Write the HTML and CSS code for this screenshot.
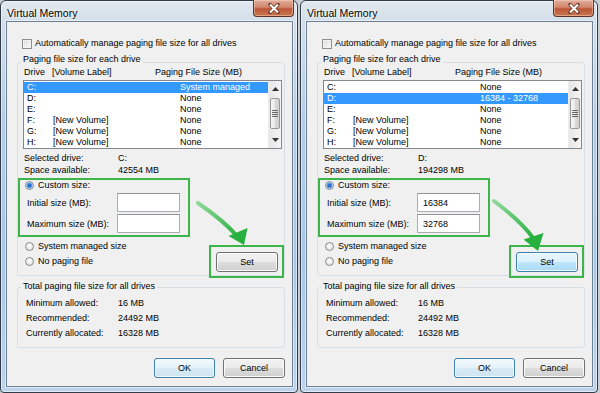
FILE: index.html
```html
<!DOCTYPE html>
<html lang="en">
<head>
  <meta charset="UTF-8">
  <title>Virtual Memory</title>
  <link rel="stylesheet" href="styles.css">
</head>
<body>
  <div class="desktop">

    <!-- left dialog: C: selected, empty custom size -->
    <div class="window">
      <div class="titlebar">
        <span class="title">Virtual Memory</span>
        <span class="close">
          <svg width="14" height="11" viewBox="0 0 14 11"><path d="M3 1.5 L11 9.5 M11 1.5 L3 9.5" stroke="#6b3322" stroke-width="3.4" stroke-linecap="round"/><path d="M3 1.5 L11 9.5 M11 1.5 L3 9.5" stroke="#fff" stroke-width="2"/></svg>
        </span>
      </div>
      <div class="client">
        <div class="auto-row"><span class="checkbox"></span>Automatically manage paging file size for all drives</div>

        <div class="group drives">
          <div class="group-title">Paging file size for each drive</div>
          <div class="list-head"><span class="hd-drive">Drive</span><span class="hd-label">[Volume Label]</span><span>Paging File Size (MB)</span></div>
          <div class="listbox">
            <ul class="rows">
              <li class="row selected"><span class="c-drive">C:</span><span class="c-label"></span><span>System managed</span></li>
              <li class="row"><span class="c-drive">D:</span><span class="c-label"></span><span>None</span></li>
              <li class="row"><span class="c-drive">E:</span><span class="c-label"></span><span>None</span></li>
              <li class="row"><span class="c-drive">F:</span><span class="c-label">[New Volume]</span><span>None</span></li>
              <li class="row"><span class="c-drive">G:</span><span class="c-label">[New Volume]</span><span>None</span></li>
              <li class="row"><span class="c-drive">H:</span><span class="c-label">[New Volume]</span><span>None</span></li>
            </ul>
            <div class="scrollbar">
              <span class="sb-btn"><svg width="7" height="4" viewBox="0 0 7 4"><path d="M0 4 L3.5 0 L7 4 Z" fill="#333"/></svg></span>
              <span class="sb-thumb"><svg width="6" height="7" viewBox="0 0 6 7"><path d="M0 .5 H6 M0 2.5 H6 M0 4.5 H6 M0 6.5 H6" stroke="#666" stroke-width="1"/></svg></span>
              <span class="sb-track"></span>
              <span class="sb-btn"><svg width="7" height="4" viewBox="0 0 7 4"><path d="M0 0 L3.5 4 L7 0 Z" fill="#333"/></svg></span>
            </div>
          </div>
          <div class="info">
            <div class="info-row"><span class="info-label">Selected drive:</span><span>C:</span></div>
            <div class="info-row"><span class="info-label">Space available:</span><span>42554 MB</span></div>
          </div>
          <div class="size-area">
            <div class="size-options">
              <div class="custom-box">
                <div class="radio-row"><span class="radio on"></span>Custom size:</div>
                <div class="field-row"><span class="field-label">Initial size (MB):</span><input class="field" type="text" value=""></div>
                <div class="field-row"><span class="field-label">Maximum size (MB):</span><input class="field" type="text" value=""></div>
              </div>
              <div class="radio-row plain first"><span class="radio"></span>System managed size</div>
              <div class="radio-row plain"><span class="radio"></span>No paging file</div>
            </div>
            <div class="set-box"><button class="btn">Set</button></div>
          </div>
        </div>

        <div class="group totals">
          <div class="group-title">Total paging file size for all drives</div>
          <div class="total-rows">
            <div class="total-row"><span class="total-label">Minimum allowed:</span><span>16 MB</span></div>
            <div class="total-row"><span class="total-label">Recommended:</span><span>24492 MB</span></div>
            <div class="total-row"><span class="total-label">Currently allocated:</span><span>16328 MB</span></div>
          </div>
        </div>

        <div class="buttons">
          <button class="btn default ok">OK</button>
          <button class="btn cancel">Cancel</button>
        </div>
      </div>
      <svg class="arrow" viewBox="0 0 298 393">
        <defs>
          <linearGradient id="arrow-left" gradientUnits="userSpaceOnUse" x1="198" y1="203" x2="238" y2="238">
            <stop offset="0" stop-color="#8fd89a"/>
            <stop offset="1" stop-color="#27b03e"/>
          </linearGradient>
        </defs>
        <path d="M198 203 Q224 221 237 236" fill="none" stroke="url(#arrow-left)" stroke-width="4" stroke-linecap="round"/>
        <polygon points="244,245 228.5,236 247.5,228" fill="#27b03e"/>
      </svg>
    </div>

    <!-- right dialog: D: selected, values typed in -->
    <div class="window">
      <div class="titlebar">
        <span class="title">Virtual Memory</span>
        <span class="close">
          <svg width="14" height="11" viewBox="0 0 14 11"><path d="M3 1.5 L11 9.5 M11 1.5 L3 9.5" stroke="#6b3322" stroke-width="3.4" stroke-linecap="round"/><path d="M3 1.5 L11 9.5 M11 1.5 L3 9.5" stroke="#fff" stroke-width="2"/></svg>
        </span>
      </div>
      <div class="client">
        <div class="auto-row"><span class="checkbox"></span>Automatically manage paging file size for all drives</div>

        <div class="group drives">
          <div class="group-title">Paging file size for each drive</div>
          <div class="list-head"><span class="hd-drive">Drive</span><span class="hd-label">[Volume Label]</span><span>Paging File Size (MB)</span></div>
          <div class="listbox">
            <ul class="rows">
              <li class="row"><span class="c-drive">C:</span><span class="c-label"></span><span>None</span></li>
              <li class="row selected"><span class="c-drive">D:</span><span class="c-label"></span><span>16384 - 32768</span></li>
              <li class="row"><span class="c-drive">E:</span><span class="c-label"></span><span>None</span></li>
              <li class="row"><span class="c-drive">F:</span><span class="c-label">[New Volume]</span><span>None</span></li>
              <li class="row"><span class="c-drive">G:</span><span class="c-label">[New Volume]</span><span>None</span></li>
              <li class="row"><span class="c-drive">H:</span><span class="c-label">[New Volume]</span><span>None</span></li>
            </ul>
            <div class="scrollbar">
              <span class="sb-btn"><svg width="7" height="4" viewBox="0 0 7 4"><path d="M0 4 L3.5 0 L7 4 Z" fill="#333"/></svg></span>
              <span class="sb-thumb"><svg width="6" height="7" viewBox="0 0 6 7"><path d="M0 .5 H6 M0 2.5 H6 M0 4.5 H6 M0 6.5 H6" stroke="#666" stroke-width="1"/></svg></span>
              <span class="sb-track"></span>
              <span class="sb-btn"><svg width="7" height="4" viewBox="0 0 7 4"><path d="M0 0 L3.5 4 L7 0 Z" fill="#333"/></svg></span>
            </div>
          </div>
          <div class="info">
            <div class="info-row"><span class="info-label">Selected drive:</span><span>D:</span></div>
            <div class="info-row"><span class="info-label">Space available:</span><span>194298 MB</span></div>
          </div>
          <div class="size-area">
            <div class="size-options">
              <div class="custom-box">
                <div class="radio-row"><span class="radio on"></span>Custom size:</div>
                <div class="field-row"><span class="field-label">Initial size (MB):</span><input class="field" type="text" value="16384"></div>
                <div class="field-row"><span class="field-label">Maximum size (MB):</span><input class="field" type="text" value="32768"></div>
              </div>
              <div class="radio-row plain first"><span class="radio"></span>System managed size</div>
              <div class="radio-row plain"><span class="radio"></span>No paging file</div>
            </div>
            <div class="set-box"><button class="btn hot">Set</button></div>
          </div>
        </div>

        <div class="group totals">
          <div class="group-title">Total paging file size for all drives</div>
          <div class="total-rows">
            <div class="total-row"><span class="total-label">Minimum allowed:</span><span>16 MB</span></div>
            <div class="total-row"><span class="total-label">Recommended:</span><span>24492 MB</span></div>
            <div class="total-row"><span class="total-label">Currently allocated:</span><span>16328 MB</span></div>
          </div>
        </div>

        <div class="buttons">
          <button class="btn default ok">OK</button>
          <button class="btn cancel">Cancel</button>
        </div>
      </div>
      <svg class="arrow" viewBox="0 0 298 393">
        <defs>
          <linearGradient id="arrow-right" gradientUnits="userSpaceOnUse" x1="194" y1="201" x2="234" y2="240">
            <stop offset="0" stop-color="#8fd89a"/>
            <stop offset="1" stop-color="#27b03e"/>
          </linearGradient>
        </defs>
        <path d="M194 201 Q222 222 233 238" fill="none" stroke="url(#arrow-right)" stroke-width="4" stroke-linecap="round"/>
        <polygon points="238,251 223.5,239.5 243.5,233" fill="#27b03e"/>
      </svg>
    </div>

  </div>
</body>
</html>
```

FILE: styles.css
```css
* {
  box-sizing: border-box;
}

body {
  margin: 0;
  background: #c9ced4;
  font-family: "Liberation Sans", Arial, sans-serif;
  font-size: 9px;
  color: #000;
}

.desktop {
  display: flex;
  gap: 2px;
  width: 600px;
  height: 393px;
}

/* aero glass frame */
.window {
  position: relative;
  display: flex;
  flex-direction: column;
  width: 298px;
  height: 393px;
  padding: 0 4px 5px 5px;
  border: 1px solid #323c48;
  border-radius: 6px 6px 4px 4px;
  background: linear-gradient(#e2e8ee, #d3dfea 18px, #b3cde8 120px, #a6c7e6 260px, #bcd4ec);
  box-shadow: inset 0 0 0 1px rgba(255, 255, 255, 0.55);
}

.titlebar {
  display: flex;
  justify-content: space-between;
  align-items: flex-start;
  height: 20px;
}

.title {
  padding: 6px 0 0 1px;
  font-size: 10.5px;
  line-height: 12px;
  color: #000;
  text-shadow: 0 0 5px #fff, 0 0 2px #fff;
}

.close {
  display: flex;
  align-items: center;
  justify-content: center;
  width: 41px;
  height: 17px;
  margin: -1px -1px 0 0;
  border: 1px solid #5f3427;
  border-top: none;
  border-radius: 0 0 4px 4px;
  background: linear-gradient(#dfae9c, #d2866c 45%, #bb5638 55%, #c9774f);
  box-shadow: inset 0 0 0 1px rgba(255, 220, 200, 0.45);
}

.client {
  height: 366px;
  border: 1px solid #6f8092;
  background: #f0f0f0;
  box-shadow: 0 0 0 1px rgba(255, 255, 255, 0.5);
}

.auto-row {
  display: flex;
  align-items: center;
  gap: 3px;
  height: 11px;
  margin: 16px 0 0 15px;
  line-height: 11px;
}

.checkbox {
  flex: none;
  width: 10px;
  height: 10px;
  border: 1px solid #8e8f8f;
  background: linear-gradient(135deg, #d9d9d9, #fdfdfd);
  box-shadow: inset 0 0 0 1px #f2f2f2;
}

/* group boxes */
.group {
  border: 1px solid #d5dfe5;
  border-radius: 3px;
}

.group-title {
  display: table;
  padding: 0 2px;
  background: #f0f0f0;
  line-height: 10px;
}

.drives {
  margin: 13px 7px 0 10px;
  padding: 0 2px 6px 5px;
}

.drives .group-title {
  margin: -9px 0 0 -2px;
}

.list-head {
  display: flex;
  margin-top: 3px;
  padding-left: 1px;
  line-height: 10px;
}

.hd-drive {
  width: 28px;
}

.hd-label {
  width: 103px;
}

.listbox {
  display: flex;
  height: 69px;
  margin-top: 3px;
  border: 1px solid #828790;
  background: #fff;
}

.rows {
  flex: 1;
  margin: 0;
  padding: 1px 0 0;
  list-style: none;
}

.row {
  display: flex;
  height: 11px;
  padding-left: 3px;
  line-height: 11px;
}

.row.selected {
  background: #3399ff;
  color: #fff;
}

.c-drive {
  width: 26px;
}

.c-label {
  width: 127px;
}

.scrollbar {
  display: flex;
  flex-direction: column;
  width: 13px;
  background: linear-gradient(90deg, #e6e6e6, #f5f5f5);
  border-left: 1px solid #ececec;
}

.sb-btn {
  display: flex;
  align-items: center;
  justify-content: center;
  height: 16px;
}

.sb-thumb {
  display: flex;
  align-items: center;
  justify-content: center;
  height: 31px;
  margin: 1px 1px 0;
  border: 1px solid #979797;
  border-radius: 2px;
  background: linear-gradient(90deg, #f6f6f6, #e9e9e9 50%, #dadada 51%, #d0d0d0);
}

.sb-track {
  flex: 1;
}

.info {
  margin-top: 3px;
  padding-left: 1px;
}

.info-row {
  display: flex;
  line-height: 12px;
}

.info-label {
  width: 94px;
}

.size-area {
  display: flex;
  justify-content: space-between;
  align-items: flex-end;
}

/* green annotation boxes */
.custom-box {
  width: 172px;
  height: 59px;
  margin: 2px 0 0 -5px;
  padding-left: 5px;
  border: 2px solid #3db649;
}

.radio-row {
  display: flex;
  align-items: center;
  gap: 4px;
  height: 11px;
  line-height: 11px;
}

.radio-row.plain {
  height: 15px;
  padding-left: 2px;
}

.radio-row.first {
  margin-top: 2px;
}

.radio {
  flex: none;
  width: 9px;
  height: 9px;
  border: 1px solid #8a8a8a;
  border-radius: 50%;
  background: radial-gradient(circle at 50% 40%, #ffffff, #d8d8d8);
}

.radio.on {
  border-color: #7d8a99;
  background: radial-gradient(circle, #1c62c4 0, #3c86e0 2px, #a9c9ee 3px, #f2f2f2 3.5px);
}

.field-row {
  display: flex;
  align-items: center;
  height: 19px;
  margin-top: 2px;
  padding-left: 2px;
}

.field-label {
  width: 90px;
}

.field {
  width: 63px;
  height: 19px;
  margin: 0;
  padding: 0 0 0 5px;
  border: 1px solid #abadb3;
  border-top-color: #8f949c;
  background: #fff;
  font: inherit;
  color: #000;
}

.set-box {
  position: relative;
  width: 75px;
  height: 33px;
  margin: 0 -2px -9px 0;
  padding: 5px 4px 4px 5px;
  border: 2px solid #3db649;
}

/* win7 push buttons */
.btn {
  height: 20px;
  padding: 0;
  border: 1px solid #707070;
  border-radius: 3px;
  background: linear-gradient(#f2f2f2, #ebebeb 50%, #dddddd 51%, #cfcfcf);
  box-shadow: inset 0 0 0 1px #fbfbfb;
  font: inherit;
  color: #000;
}

.set-box .btn {
  width: 62px;
}

.btn.default,
.btn.hot {
  border-color: #3c7fb1;
  background: linear-gradient(#eaf6fd, #d9f0fc 50%, #bee6fd 51%, #a7d9f5);
  box-shadow: inset 0 0 0 1px #f4fbff;
}

.btn.default {
  background: linear-gradient(#f3f9fc, #e4f1f9 50%, #d7eaf5 51%, #cfe4f1);
}

.totals {
  margin: 11px 7px 0 10px;
  padding: 0 2px 6px 8px;
}

.totals .group-title {
  margin: -7px 0 0 -5px;
}

.total-rows {
  margin-top: 5px;
}

.total-row {
  display: flex;
  line-height: 15px;
}

.total-label {
  width: 92px;
}

.buttons {
  display: flex;
  justify-content: flex-end;
  gap: 8px;
  margin: 10px 7px 0 0;
}

.ok {
  width: 61px;
}

.cancel {
  width: 62px;
}

.arrow {
  position: absolute;
  left: -1px;
  top: -1px;
  width: 298px;
  height: 393px;
  pointer-events: none;
}
```
